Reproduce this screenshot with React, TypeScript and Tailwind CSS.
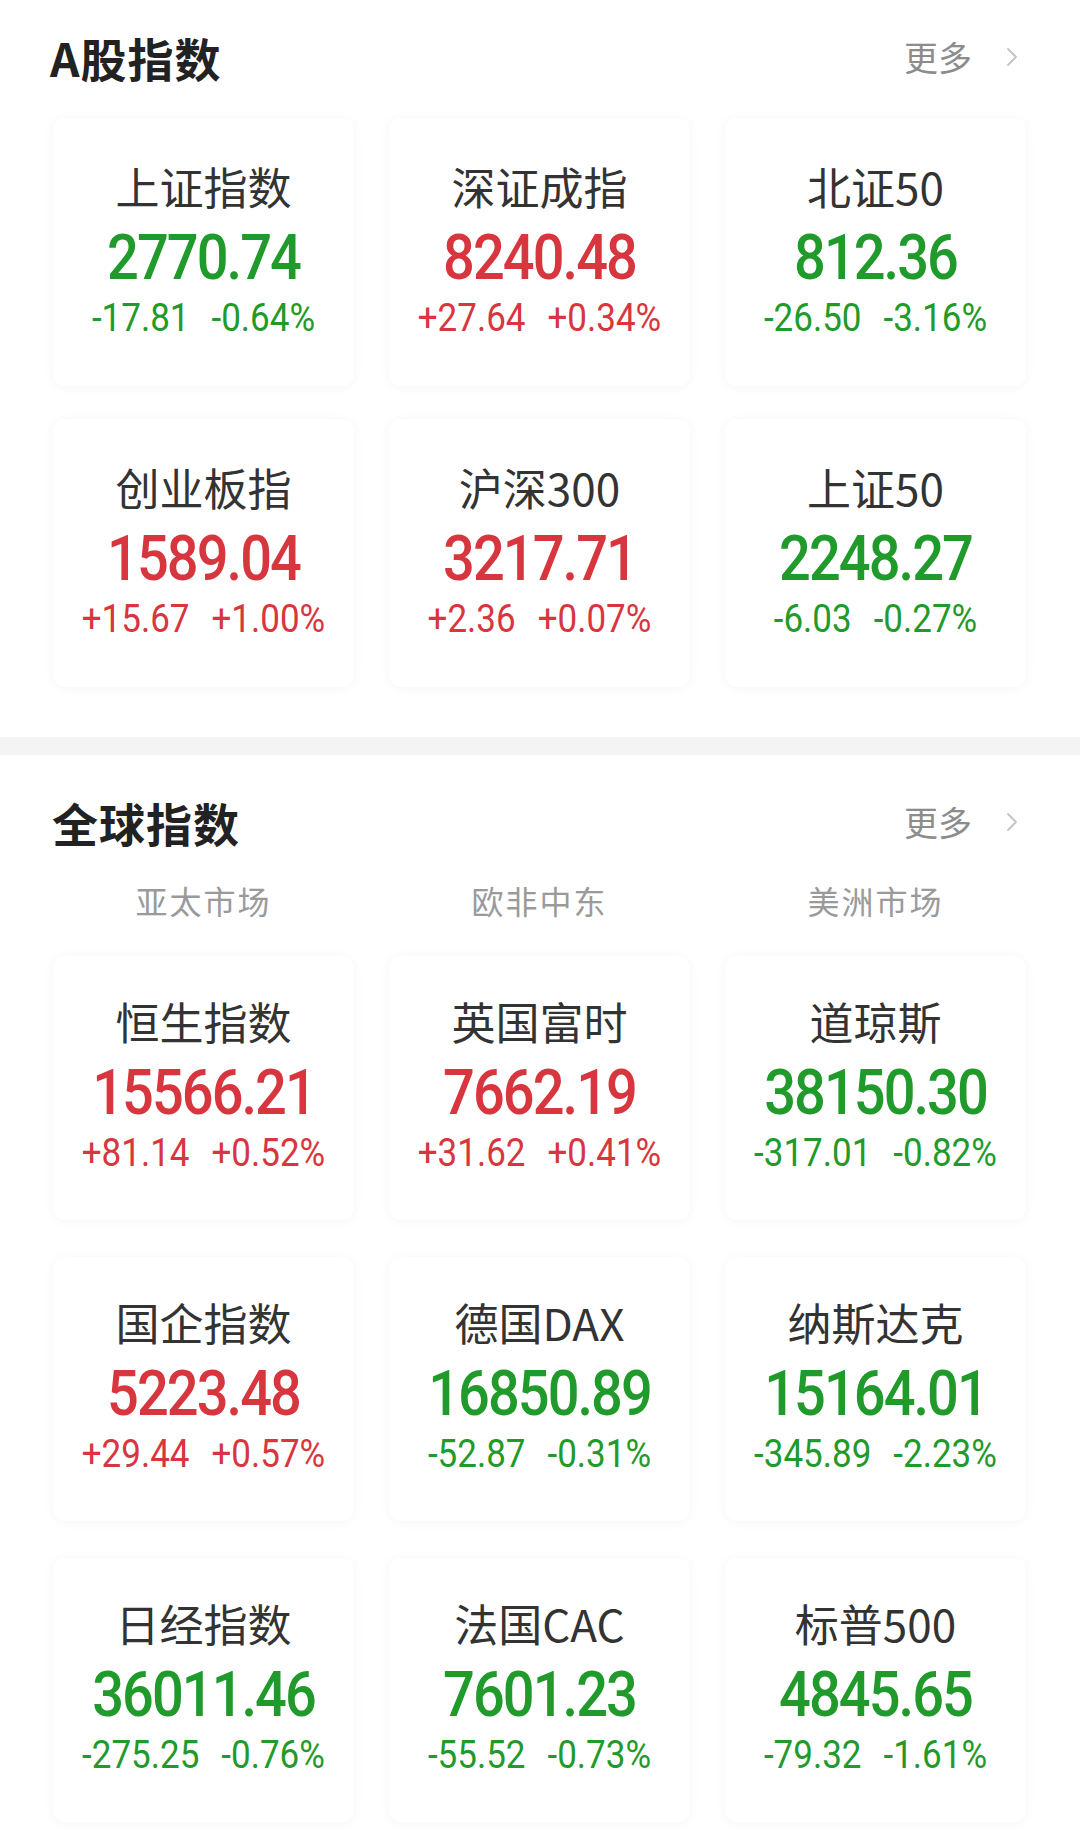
import { ChevronRight } from 'lucide-react';

type Quote = {
  name: string;
  price: string;
  change: string;
  pct: string;
};

const aShares: Quote[] = [
  { name: '上证指数', price: '2770.74', change: '-17.81', pct: '-0.64%' },
  { name: '深证成指', price: '8240.48', change: '+27.64', pct: '+0.34%' },
  { name: '北证50', price: '812.36', change: '-26.50', pct: '-3.16%' },
  { name: '创业板指', price: '1589.04', change: '+15.67', pct: '+1.00%' },
  { name: '沪深300', price: '3217.71', change: '+2.36', pct: '+0.07%' },
  { name: '上证50', price: '2248.27', change: '-6.03', pct: '-0.27%' },
];

const globalIdx: Quote[] = [
  { name: '恒生指数', price: '15566.21', change: '+81.14', pct: '+0.52%' },
  { name: '英国富时', price: '7662.19', change: '+31.62', pct: '+0.41%' },
  { name: '道琼斯', price: '38150.30', change: '-317.01', pct: '-0.82%' },
  { name: '国企指数', price: '5223.48', change: '+29.44', pct: '+0.57%' },
  { name: '德国DAX', price: '16850.89', change: '-52.87', pct: '-0.31%' },
  { name: '纳斯达克', price: '15164.01', change: '-345.89', pct: '-2.23%' },
  { name: '日经指数', price: '36011.46', change: '-275.25', pct: '-0.76%' },
  { name: '法国CAC', price: '7601.23', change: '-55.52', pct: '-0.73%' },
  { name: '标普500', price: '4845.65', change: '-79.32', pct: '-1.61%' },
];

const SectionHeader = ({ title }: { title: string }) => (
  <div className="flex items-center justify-between">
    <h2 className="text-[46px] leading-none font-bold text-[#222222] tracking-[1px]">{title}</h2>
    <div className="flex items-center gap-[24px] text-[#8c8c8c]">
      <span className="text-[34px] leading-none">更多</span>
      <ChevronRight className="w-[32px] h-[32px] text-[#c4c4c4]" strokeWidth={1.4} />
    </div>
  </div>
);

const QuoteCard = ({ q, tall }: { q: Quote; tall?: boolean }) => {
  const up = q.change.startsWith('+');
  const color = up ? 'text-[#d8363e]' : 'text-[#1f9a2b]';
  return (
    <div
      className={`flex flex-col items-center bg-white rounded-[12px] shadow-[0_1px_12px_rgba(0,0,0,0.045)] ${
        tall ? 'h-[268px] pt-[46px]' : 'h-[264px] pt-[43px]'
      }`}
    >
      <div className="text-[44px] leading-none text-[#333333]">{q.name}</div>
      <div
        className={`mt-[21px] text-[56px] leading-none font-medium tracking-[-0.035em] scale-y-[1.14] ${color}`}
        style={{ fontFamily: 'Roboto, "Noto Sans", sans-serif' }}
      >
        {q.price}
      </div>
      <div
        className={`mt-[16px] flex gap-[22px] text-[35px] leading-none scale-y-[1.1] ${color}`}
        style={{ fontFamily: 'Roboto, "Noto Sans", sans-serif' }}
      >
        <span>{q.change}</span>
        <span>{q.pct}</span>
      </div>
    </div>
  );
};

export default function App() {
  return (
    <div
      className="w-[1080px] min-h-[1848px] bg-white"
      style={{ fontFamily: '"Noto Sans CJK SC", "Noto Sans", sans-serif' }}
    >
      {/* A股 */}
      <section className="pt-[34px] pb-[50px] pl-[50px] pr-[52px]">
        <SectionHeader title="A股指数" />
        <div className="mt-[38px] ml-[3px] mr-[2px] grid grid-cols-3 gap-x-[35px] gap-y-[33px]">
          {aShares.map((q) => (
            <QuoteCard key={q.name} q={q} tall />
          ))}
        </div>
      </section>

      <div className="h-[18px] bg-[#f4f4f4]" />

      {/* 全球 */}
      <section className="pt-[44px] pb-[27px] pl-[52px] pr-[52px]">
        <SectionHeader title="全球指数" />
        <div className="mt-[20px] ml-[1px] mr-[2px] h-[70px] grid grid-cols-3 gap-x-[35px] items-center text-[32px] leading-none text-[#9a9a9a] tracking-[2px]">
          <div className="text-center">亚太市场</div>
          <div className="text-center">欧非中东</div>
          <div className="text-center">美洲市场</div>
        </div>
        <div className="mt-[21px] ml-[1px] mr-[2px] grid grid-cols-3 gap-x-[35px] gap-y-[37px]">
          {globalIdx.map((q) => (
            <QuoteCard key={q.name} q={q} />
          ))}
        </div>
      </section>
    </div>
  );
}
